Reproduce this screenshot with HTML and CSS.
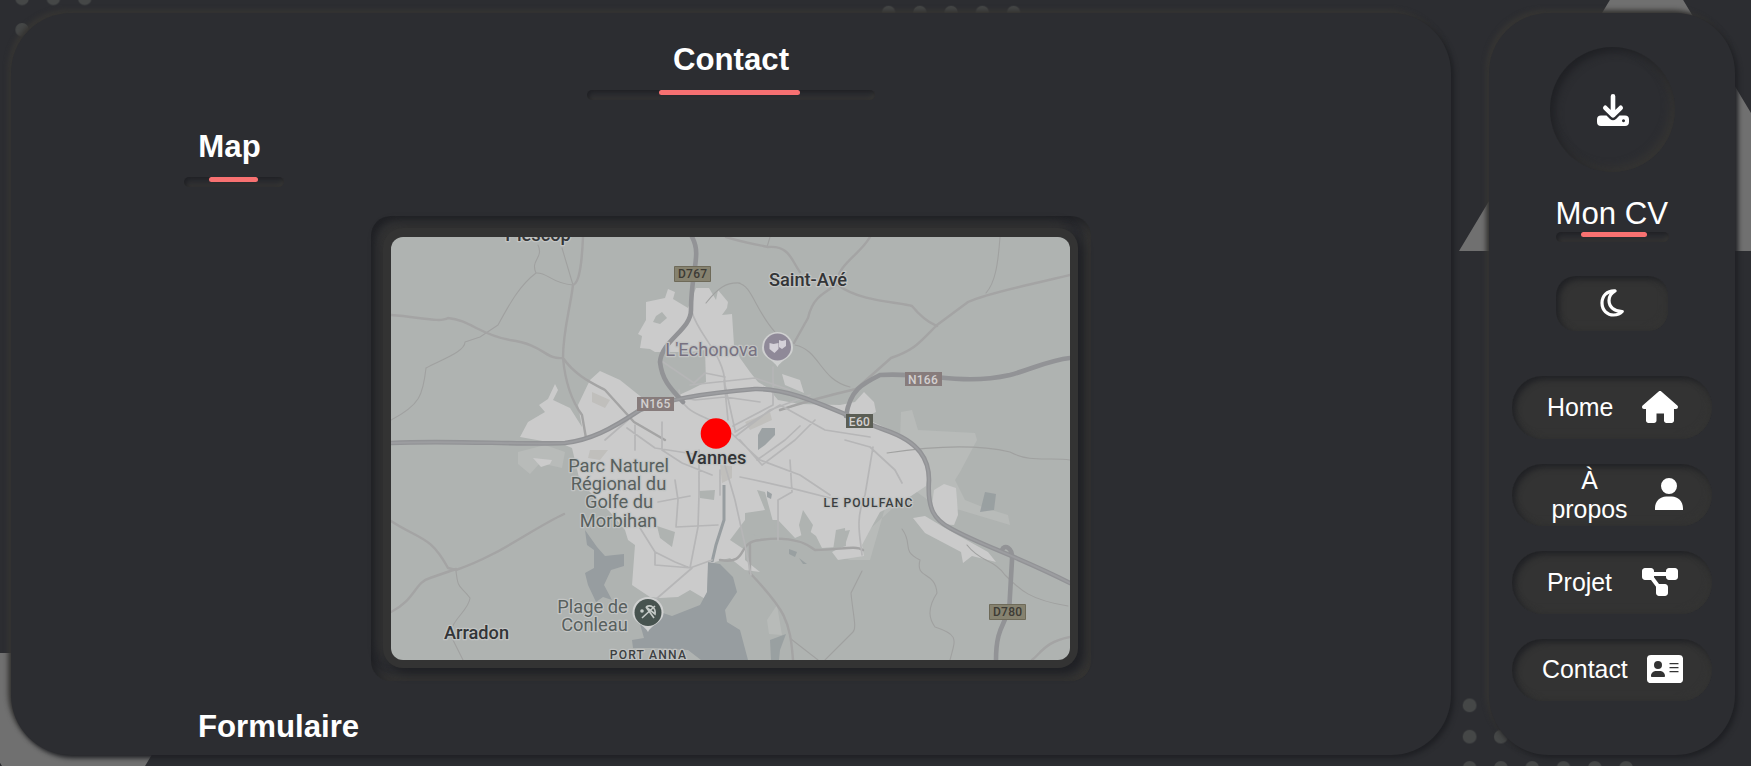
FILE: index.html
```
<!DOCTYPE html>
<html lang="fr">
<head>
<meta charset="utf-8">
<title>Contact</title>
<link rel="stylesheet" href="styles.css">
</head>
<body>
<svg class="backdrop" viewBox="0 0 1751 766" aria-hidden="true">
  <defs>
    <pattern id="dotsA" x="6.5" y="-17.1" width="31.3" height="31.3" patternUnits="userSpaceOnUse"><circle cx="15.6" cy="15.6" r="6.7" fill="#454747"/></pattern>
    <pattern id="dotsB" x="873" y="-3" width="31.25" height="31.25" patternUnits="userSpaceOnUse"><circle cx="15.6" cy="15.6" r="6.7" fill="#454747"/></pattern>
    <pattern id="dotsC" x="1454" y="689.7" width="31.3" height="31.3" patternUnits="userSpaceOnUse"><circle cx="15.6" cy="15.6" r="6.9" fill="#454747"/></pattern>
  </defs>
  <path fill="#707070" d="M1646.500-61 1459 251H1834ZM-66 653H213L73.500 885Z"/>
  <path fill="url(#dotsA)" d="M6.500-17.100H100.400V45.500H6.500z"/>
  <path fill="url(#dotsB)" d="M873-3H1029.200V28H873z"/>
  <path fill="url(#dotsC)" d="M1454 689.700H1641.800V783H1454z"/>
</svg>
<div class="layout">
  <main class="panel content">
    <h1 class="heading page-title">Contact<span class="rule"></span></h1>
    <h2 class="heading section-title map-title"><span class="map-word">Map</span><span class="rule"></span></h2>
    <div class="map-frame"><div class="map-card">
      <svg class="map" viewBox="391 237 679 423" role="img" aria-label="Carte de Vannes">
        <rect x="391" y="237" width="679" height="423" fill="#afb3b1"/>
        <path fill="#b8bbb9" d="M900 440 901 412 912 410 918 430 975 433 977 440 960 472 955 480 965 500 985 508 1008 515 1010 525 960 510 935 505 900 480ZM518 452 545 445 565 452 562 468 540 463 530 474 518 464ZM893 508 905 505 890 500 885 508 870 560 850 560 840 556ZM767 620 777 605 782 635 769 634Z"/>
        <g fill="#cbcbcb">
          <path d="M520 437 528 422 545 412 539 405 548 399 555 384 558 390 553 400 570 408 582 427 578 405 590 380 600 371 620 380 640 396 648 402 668 400 690 390 706 382 705 350 690 352 655 352 650 349 640 348 642 336 638 334 646 320 646 302 665 298 668 289 675 292 673 299 688 308 696 288 709 288 716 300 718 290 728 302 727 308 722 315 732 314 734 345 740 358 750 372 758 382 768 388 778 400 800 404 840 405 855 402 864 392 874 402 876 412 864 418 895 432 918 446 928 468 926 486 905 500 880 512 870 530 862 545 864 556 838 560 832 552 845 545 850 530 838 532 836 547 822 548 816 536 808 530 802 535 795 538 778 520 745 520 730 540 745 550 745 560 760 572 745 570 730 558 715 562 708 570 707 600 690 590 678 597 660 598 650 597 632 585 635 545 628 540 625 530 610 512 600 502 580 482 572 448 565 445Z"/>
          <path d="M782 374 800 380 804 393 785 385ZM934 490 944 484 956 488 957 500 958 515 954 525 940 524 932 505Z"/>
          <path d="M913 518 925 516 945 528 988 552 996 562 972 556 963 563 961 552 925 533Z"/>
          <path d="M533 458 552 460 550 464 541 467Z"/>
        </g>
        <path fill="#afb3b1" d="M656 316 662 312 667 318 660 324 653 322ZM699 491 715 490 714 500 700 498ZM657 526 675 532 672 547 660 538ZM803 510 813 525 808 540 802 538 799 525ZM836 530 845 528 846 546 833 550ZM745 513 765 510 757 490 765 492 778 540 745 533Z"/>
        <path fill="#c0bfbc" d="M592 392 610 400 605 408 592 402ZM720 465 732 466 732 478 722 483ZM590 450 608 450 600 460 588 458ZM745 422 770 412 772 420 750 430Z"/>
        <g fill="#979da0">
          <path d="M585 530 597 547 605 556 624 554 624 566 611 570 604 585 612 600 603 597 596 602 588 585 585 573 594 568 594 550 587 545Z"/>
          <path d="M708 562 720 564 733 577 737 592 725 610 727 622 740 630 748 660H701L688 650 655 648 633 648 632 640 644 638 640 624 660 612 672 616 700 605 707 592Z"/>
          <path d="M758 435 762 428 775 428 775 435 765 445 758 450ZM770 640 786 634 780 650 779 660H771ZM767 491 772 494 771 499 767 497ZM985 492 996 494 994 510 980 512ZM789 549 797 552 795 557 789 554ZM799 558 807 564 803 564Z" opacity=".9"/>
          <path fill="none" stroke="#979da0" stroke-width="3" d="M724 485V520L716 545 712 562"/>
        </g>
        <g class="road-thin">
          <path d="M538 245C544 258 530 260 536 273C520 285 510 303 498 325L480 337 465 342C465 352 440 360 426 368C423 395 420 405 391 420M536 273C548 272 550 283 573 285L562 248M456 571C458 590 460 585 470 598C469 612 444 624 453 640L463 660M738 283C752 285 755 310 775 332M770 237 767 247M1000 237C998 265 995 283 986 293M795 345C820 350 820 380 850 387M706 303C718 288 726 282 740 283M862 571 851 593C853 615 857 628 853 632L825 660M791 639 818 660M902 529C914 545 900 550 920 560C915 580 935 570 937 593C926 610 930 620 935 627C960 635 955 640 950 660"/>
          <path d="M887 453C940 445 980 445 1010 452C1030 463 1050 457 1070 460M967 545C980 562 995 560 1005 575C1020 590 1030 600 1068 606"/>
        </g>
        <g class="road-mid">
          <path d="M583 237C582 260 580 283 573 285C570 310 563 330 563 358C565 380 571 400 582 415L586 438M391 315C420 317 440 323 448 318C470 320 480 335 510 340C545 345 545 360 563 358C575 375 590 382 605 390L634 422 665 440M726 237C745 243 760 245 768 247C790 245 792 262 800 272M870 237C860 255 838 263 836 285C820 295 812 300 808 318L794 343M838 285C860 302 900 302 912 306C925 322 935 325 937 326M1070 275C1030 285 990 292 968 302L937 325C920 342 915 350 891 358L856 389C830 395 810 400 780 410M391 521C420 540 430 535 448 568L456 570C500 555 530 530 564 514M391 612C415 600 415 582 430 578L456 569M720 560C750 565 735 542 760 540C780 537 800 538 815 550C840 550 855 545 863 550M750 545V573C785 610 790 620 793 660M1070 637C1045 642 1042 652 1032 660"/>
        </g>
        <g class="road-town">
          <path d="M692 312C698 335 725 355 725 385L735 430M724 380 728 420M773 367V405L733 426M679 390C680 410 700 415 710 420L730 432 760 460 800 475 830 495M735 432 780 405 825 430 870 437M722 455 735 500 745 545 751 575M635 425V450M662 422V450L682 463 712 475M627 428 655 448 700 455M605 440 628 420M640 528 655 552 675 562 690 568 712 560M655 552V565L692 568 655 600M676 527 678 500 675 480M660 360 694 383 705 373 725 377M670 395 695 400 725 397 760 402M699 450V495L698 527 690 568M676 527 718 525M658 502 690 496M736 436 770 410 810 395M720 470V495M757 460 785 440 800 426M873 447 865 495C855 520 860 535 862 555M790 460 792 492 778 500V540M740 477C780 485 800 490 830 498M845 440 870 447 895 470 902 483M740 440 762 465 795 440 815 420M690 385 755 378 790 390"/>
        </g>
        <g class="highway">
          <path d="M391 443C450 440 520 445 565 443C590 440 610 430 640 410 665 400 705 393 755 389C795 388 835 412 885 430 920 442 929 460 929 480C927 510 935 520 950 528 980 545 1015 555 1070 583"/>
          <path d="M692 237C702 255 691 270 691 310C691 330 662 340 660 362C662 380 670 388 683 402"/>
          <path d="M846 416C850 390 862 384 880 375 930 372 960 386 1010 375 1035 368 1050 360 1070 358M1002 550C1004 544 1013 547 1012 560L1010 595C1010 625 996 620 996 660"/>
        </g>
        <path class="highway-core" d="M391 443C450 440 520 445 565 443C590 440 610 430 640 410 665 400 705 393 755 389C795 388 835 412 885 430 920 442 929 460 929 480C927 510 935 520 950 528 980 545 1015 555 1070 583"/>
        <g class="badges">
          <path fill="#86826f" stroke="#6e6a59" d="M674.500 266.500h36v15h-36zM989.500 604.500h36v15h-36z"/>
          <path fill="#877c7c" d="M637 397h37v14h-37zM905 372h37v14h-37z"/><path fill="#5b5e55" d="M846 414h27v14h-27z"/>
          <text class="dark" x="692.700" y="278.300">D767</text><text class="dark" x="1007.700" y="616.300">D780</text>
          <text x="655.500" y="408">N165</text><text x="923" y="384">N166</text><text x="859.500" y="425.500">E60</text>
        </g>
        <g class="pin"><path d="M777.500 367C773 359 762 358 762 347.500A15.500 15.500 0 0 1 793 347.500C793 358 782 359 777.500 367Z"/><circle cx="777.500" cy="347" r="13.500" fill="#8f8998"/><path fill="#d4d1d8" d="M769.500 343l4 1 5-1v6l-4 4-5-4zM779 340l3 1 4-1v6l-4 3-3-2z"/></g>
        <g class="pin"><path d="M648 632C644 624 632.500 623 632.500 612.500A15.500 15.500 0 0 1 663.500 612.500C663.500 623 652 624 648 632Z"/><circle cx="648" cy="612.500" r="13.500" fill="#47534f"/><path fill="none" stroke="#c5cac7" stroke-width="1.600" d="M642 618 655 606M646 607c5-3 10 1 9 7l-9-7 8 11"/><circle cx="642" cy="611" r="1.800" fill="#c5cac7"/></g>
        <g class="labels">
          <g class="town"><text x="538" y="241">Plescop</text><text x="808" y="285.500">Saint-Avé</text><text x="716" y="463.500">Vannes</text><text x="476.500" y="639">Arradon</text></g>
          <g class="place"><text x="618.500" y="471.500">Parc Naturel</text><text x="618.500" y="490">Régional du</text><text x="619" y="508">Golfe du</text><text x="618.500" y="526.500">Morbihan</text><text x="592.500" y="613">Plage de</text><text x="594.500" y="631">Conleau</text></g>
          <text class="venue" x="711.500" y="356">L'Echonova</text>
          <g class="district"><text x="868.500" y="507">LE POULFANC</text><text x="648.500" y="659">PORT ANNA</text></g>
        </g>
        <circle cx="716" cy="433.500" r="15.300" fill="#f00"/>
      </svg>
    </div></div>
    <h2 class="heading section-title form-title">Formulaire<span class="rule"></span></h2>
  </main>
  <aside class="panel sidebar">
    <a class="cv-button"><svg class="icon-cv" viewBox="0 0 32 32"><path fill="#fff" fill-rule="evenodd" d="M4 21.500H9.500L13 25Q16 27.500 19 25L22.500 21.500H28Q32 21.500 32 25.500V28Q32 32 28 32H4Q0 32 0 28V25.500Q0 21.500 4 21.500ZM26.500 25.200a1.500 1.500 0 1 0 .01 0z"/><path fill="none" stroke="#2c2d31" stroke-width="6" stroke-linejoin="round" d="M8.500 14 16 21.500 23.500 14"/><path fill="none" stroke="#fff" stroke-width="4.600" stroke-linecap="round" stroke-linejoin="round" d="M16 2.300V20M8.300 13.800 16 21.300 23.700 13.800"/></svg></a>
    <div class="cv-label">Mon CV<span class="rule"></span></div>
    <button class="theme" aria-label="Thème"><svg class="icon-moon" viewBox="0 0 24 28"><path fill="none" stroke="#fff" stroke-width="3.200" stroke-linejoin="round" d="M15 1.900C7 1.500 2 7 2 14C2 21.500 7.500 26 13.500 26C17.500 26 20.500 24.500 22.200 22.500C14.500 22.500 9 18 9 11.500C9 7.500 11.500 4 15 1.900Z"/></svg></button>
    <nav class="nav">
      <a class="nav-item home"><span>Home</span><svg viewBox="0 0 576 512"><path d="M575.800 255.500c0 18-15 32.100-32 32.100h-32l.7 160.200c0 2.700-.2 5.400-.5 8.100V472c0 22.100-17.900 40-40 40H392c-22.100 0-40-17.900-40-40V360H232v112c0 22.100-17.900 40-40 40H104c-22.100 0-40-17.900-40-40V287.600H32c-18 0-32-14-32-32.100 0-9 3-17 10-24L266.400 8c7-7 15-8 22-8s15 2 21 7l255.400 224.500c8 7 12 15 11 24z"/></svg></a>
      <a class="nav-item about"><span>À propos</span><svg class="narrow" viewBox="0 0 448 512"><path d="M224 256a128 128 0 1 0 0-256 128 128 0 1 0 0 256zm-45.700 40C79.800 296 0 375 0 482.300V512h448v-29.700C448 375 368.200 296 269.700 296z"/></svg></a>
      <a class="nav-item project"><span>Projet</span><svg viewBox="0 0 576 512"><path d="M0 80c0-26.500 21.500-48 48-48h96c26.500 0 48 21.500 48 48v16h192V80c0-26.500 21.500-48 48-48h96c26.500 0 48 21.500 48 48v96c0 26.500-21.500 48-48 48h-96c-26.500 0-48-21.500-48-48v-16H192v16c0 1.700-.1 3.400-.3 5L272 288h96c26.500 0 48 21.500 48 48v96c0 26.500-21.500 48-48 48h-96c-26.500 0-48-21.500-48-48v-96c0-1.700.1-3.400.3-5L144 224H48c-26.500 0-48-21.500-48-48V80z"/></svg></a>
      <a class="nav-item contact"><span>Contact</span><svg viewBox="0 0 576 512"><path fill-rule="evenodd" d="M64 32C28.700 32 0 50.700 0 86v340c0 35.300 28.700 54 64 54h448c35.300 0 64-18.700 64-54V86c0-35.300-28.700-54-64-54H64zm80 256h64c44.200 0 80 35.800 80 80 0 8.800-7.200 16-16 16H80c-8.800 0-16-7.200-16-16 0-44.200 35.800-80 80-80zm32-160a64 64 0 1 1 0 128 64 64 0 1 1 0-128zm192 32h128a10 10 0 0 1 0 20H368a10 10 0 0 1 0-20zm0 64h128a10 10 0 0 1 0 20H368a10 10 0 0 1 0-20zm0 64h128a10 10 0 0 1 0 20H368a10 10 0 0 1 0-20z"/></svg></a>
    </nav>
  </aside>
</div>
</body>
</html>
```
FILE: styles.css
```
:root { --base: #2c2d31; --raised: #333; --light: #373634; --dark: #1f2024; --accent: #f87171; }
* { box-sizing: border-box; }
body { margin: 0; height: 766px; overflow: hidden; background: var(--base); color: #fff; font-family: "Liberation Sans", Arial, sans-serif; }
.backdrop { position: absolute; inset: 0; width: 1751px; height: 766px; }
.layout { position: relative; display: flex; gap: 38px; padding: 13px 16px 11px 11px; height: 766px; }
.panel { background: var(--base); border-radius: 60px; box-shadow: 3px 3px 5px var(--dark), -3px -3px 5px var(--light); }
.content { flex: 1; overflow: hidden; display: flex; flex-direction: column; }
.heading { margin: 0; font-size: 31.2px; line-height: 36px; font-weight: bold; display: flex; flex-direction: column; align-items: center; }
.rule { display: flex; width: 100%; height: 10px; border-radius: 5px; box-shadow: inset 2px 2px 4px var(--dark), inset -2px -2px 4px var(--light); }
.rule::before { content: ""; width: 49%; height: 5px; margin-left: 25%; border-radius: 3px; background: var(--accent); }
.page-title { align-self: center; width: 288px; padding-top: 29px; gap: 12px; }
.section-title { align-self: flex-start; min-width: 100px; }
.map-title { margin: 29px 0 0 173px; gap: 12px; }
.map-word { margin-right: 9px; }
.map-frame { align-self: center; width: 720px; height: 465px; flex: none; margin-top: 29px; padding: 12px 13px 13px 12px; border-radius: 20px; box-shadow: inset 5px 5px 10px var(--dark), inset -5px -5px 10px var(--light); }
.map-card { height: 440px; padding: 9px 8px 8px; border-radius: 20px; background: var(--raised); box-shadow: 5px 5px 10px var(--dark), -5px -5px 10px var(--raised); }
.map { display: block; width: 679px; height: 423px; border-radius: 12px; }
.form-title { margin: 28px 0 0 187px; gap: 14px; }
.road-thin, .road-mid, .road-town, .highway, .highway-core { fill: none; stroke-linecap: round; stroke-linejoin: round; }
.road-thin { stroke: #a0a1a0; stroke-width: 1.1; }
.road-mid { stroke: #a4a4a4; stroke-width: 2.4; }
.road-town { stroke: #b6b6b7; stroke-width: 1.7; }
.highway { stroke: #929396; stroke-width: 4.6; }
.highway-core { stroke: #9c9da0; stroke-width: 2; }
.map text { font-family: Roboto, sans-serif; text-anchor: middle; }
.badges text { font-size: 12px; font-weight: 500; fill: #d3d0d0; letter-spacing: .3px; }
.badges .dark { fill: #3d3b35; }
.pin > path:first-child { fill: #cfd0d0; }
.labels text { paint-order: stroke; stroke: #c2c4c3; stroke-width: 2.5px; stroke-linejoin: round; }
.town { font-size: 18.2px; font-weight: 500; fill: #333537; }
.place { font-size: 18.3px; fill: #58605e; }
.venue { font-size: 18.3px; fill: #777181; }
.district { font-size: 12.1px; font-weight: 500; letter-spacing: 1.2px; fill: #3c3f40; }
.sidebar { width: 246px; display: flex; flex-direction: column; align-items: center; padding-top: 34px; }
.cv-button { width: 125px; height: 125px; border-radius: 50%; display: flex; align-items: center; justify-content: center; box-shadow: inset 4px 4px 8px var(--dark), inset -4px -4px 8px var(--light); }
.icon-cv { width: 32px; height: 32px; margin-left: 1px; }
.cv-label { margin-top: 24px; font-size: 31.2px; line-height: 36px; width: 113px; white-space: nowrap; }
.cv-label .rule::before { width: 66px; margin-left: 25px; }
.theme { margin: 34px 0 0; padding: 0; width: 112px; height: 55px; border: 0; border-radius: 20px; background: var(--raised); display: flex; align-items: center; justify-content: center; box-shadow: inset 3px 3px 6px var(--dark), inset -3px -3px 6px #353534; }
.icon-moon { width: 24px; height: 28px; margin-bottom: 1px; }
.nav { margin-top: 45px; display: flex; flex-direction: column; gap: 25px; }
.nav-item { width: 200px; height: 62.5px; border-radius: 31px; background: var(--raised); display: flex; align-items: center; font-size: 24.9px; line-height: 29px; text-align: center; box-shadow: inset 3px 3px 6px var(--dark), inset -3px -3px 6px #353534; }
.nav-item svg { width: 36px; height: 32px; fill: #fff; flex: none; margin-bottom: 1px; }
.nav-item svg.narrow { width: 28px; }
.home { padding-left: 35px; gap: 29px; }
.about { padding-left: 39px; gap: 27px; }
.about span { width: 77px; }
.project { padding-left: 35px; gap: 30px; }
.contact { padding-left: 30px; gap: 19px; }
```
